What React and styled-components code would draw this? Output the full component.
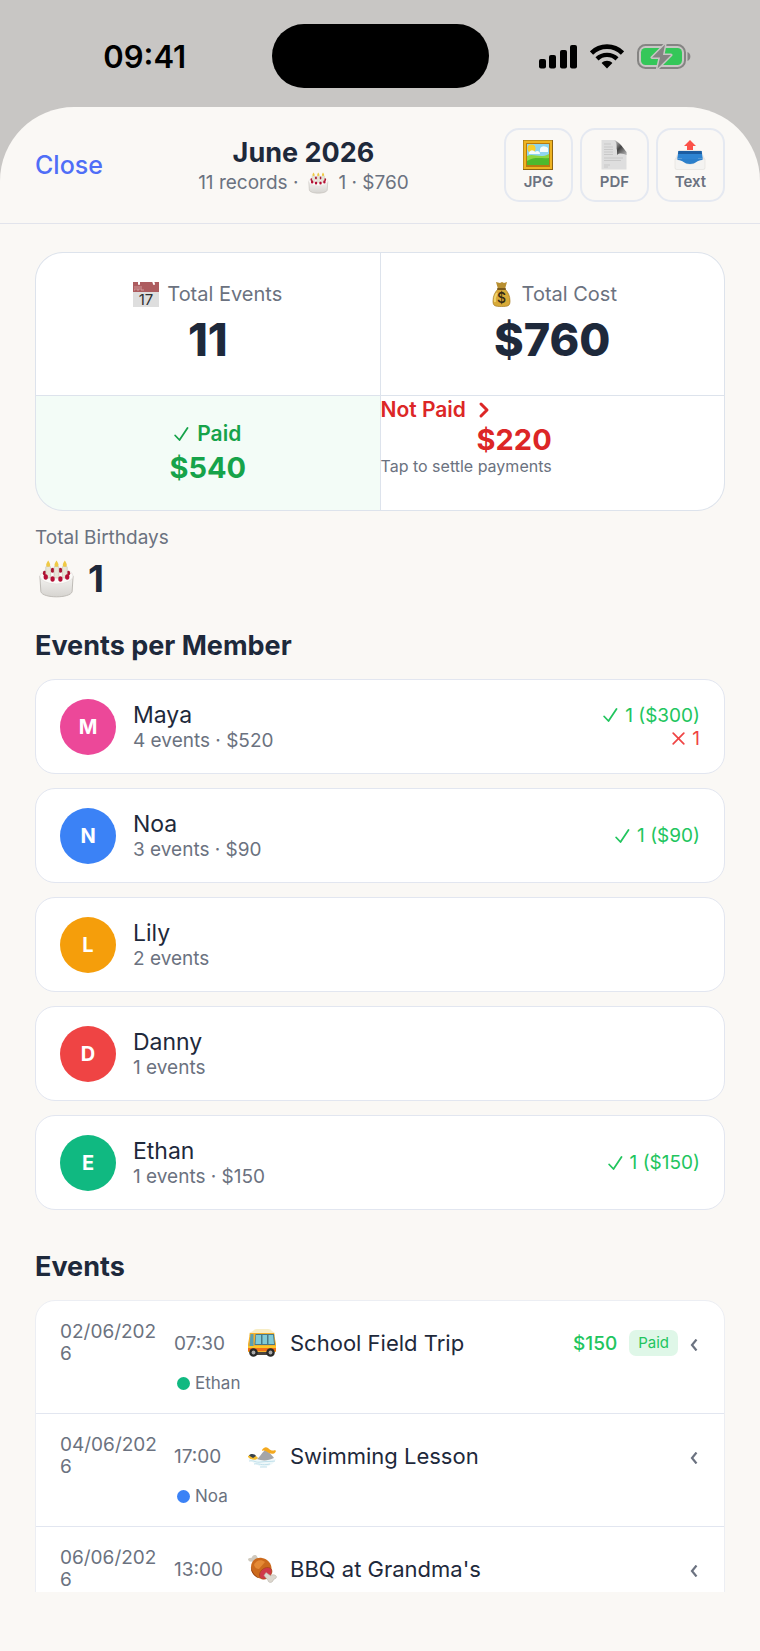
import React from "react";
import styled, { createGlobalStyle } from "styled-components";

const members = [
  { name: "Maya", color: "#ec4899", summary: "4 events · $520", paid: "1 ($300)", unpaid: "1" },
  { name: "Noa", color: "#3b82f6", summary: "3 events · $90", paid: "1 ($90)" },
  { name: "Lily", color: "#f59e0b", summary: "2 events" },
  { name: "Danny", color: "#ef4444", summary: "1 events" },
  { name: "Ethan", color: "#10b981", summary: "1 events · $150", paid: "1 ($150)" },
];

const events = [
  { date: "02/06/2026", time: "07:30", icon: BusIcon, title: "School Field Trip", price: "$150", paid: true, member: "Ethan", color: "#10b981" },
  { date: "04/06/2026", time: "17:00", icon: SwimIcon, title: "Swimming Lesson", member: "Noa", color: "#3b82f6" },
  { date: "06/06/2026", time: "13:00", icon: MeatIcon, title: "BBQ at Grandma's" },
];

export default function App() {
  return (
    <Screen>
      <GlobalStyle />
      <StatusBar>
        <Clock>09:41</Clock>
        <Island />
        <StatusIcons>
          <SignalIcon />
          <WifiIcon />
          <BatteryIcon />
        </StatusIcons>
      </StatusBar>
      <Sheet>
        <Header>
          <CloseButton type="button">Close</CloseButton>
          <HeaderText>
            <Title>June 2026</Title>
            <Subtitle>
              11 records · <CakeIcon size={24} /> 1 · $760
            </Subtitle>
          </HeaderText>
          <ExportButtons>
            <ExportButton type="button"><PictureIcon />JPG</ExportButton>
            <ExportButton type="button"><PageIcon />PDF</ExportButton>
            <ExportButton type="button"><OutboxIcon />Text</ExportButton>
          </ExportButtons>
        </Header>
        <Content>
          <Summary>
            <TotalCell>
              <TotalLabel><CalendarIcon />Total Events</TotalLabel>
              <TotalValue>11</TotalValue>
            </TotalCell>
            <TotalCell>
              <TotalLabel><MoneyIcon />Total Cost</TotalLabel>
              <TotalValue>$760</TotalValue>
            </TotalCell>
            <PaidCell>
              <PaymentLabel $gap="8px"><CheckIcon />Paid</PaymentLabel>
              <PaymentValue>$540</PaymentValue>
            </PaidCell>
            <UnpaidCell type="button">
              <PaymentLabel $gap="12px">Not Paid<ChevronIcon /></PaymentLabel>
              <UnpaidDetails>
                <PaymentValue>$220</PaymentValue>
                <Hint>Tap to settle payments</Hint>
              </UnpaidDetails>
            </UnpaidCell>
          </Summary>
          <BirthdayLabel>Total Birthdays</BirthdayLabel>
          <BirthdayValue><CakeIcon size={42} />1</BirthdayValue>

          <SectionTitle>Events per Member</SectionTitle>
          <MemberList>
            {members.map((member) => (
              <MemberCard key={member.name}>
                <Avatar $color={member.color}>{member.name[0]}</Avatar>
                <MemberInfo>
                  <MemberName>{member.name}</MemberName>
                  <MemberSummary>{member.summary}</MemberSummary>
                </MemberInfo>
                <MemberStats>
                  {member.paid && <Stat $color="#22c55e"><CheckIcon />{member.paid}</Stat>}
                  {member.unpaid && <Stat $color="#ef4444"><CrossIcon />{member.unpaid}</Stat>}
                </MemberStats>
              </MemberCard>
            ))}
          </MemberList>

          <SectionTitle $spaced>Events</SectionTitle>
          <EventList>
            {events.map(({ icon: Icon, ...event }) => (
              <EventRow key={event.date}>
                <EventMain>
                  <EventDate>{event.date}</EventDate>
                  <EventTime>{event.time}</EventTime>
                  <Icon />
                  <EventTitle>{event.title}</EventTitle>
                  {event.price && <Price>{event.price}</Price>}
                  {event.paid && <Badge>Paid</Badge>}
                  <ExpandButton type="button" aria-label={`Expand ${event.title}`}><BackIcon /></ExpandButton>
                </EventMain>
                {event.member && (
                  <EventMember><Dot $color={event.color} />{event.member}</EventMember>
                )}
              </EventRow>
            ))}
          </EventList>
        </Content>
      </Sheet>
    </Screen>
  );
}

function SignalIcon() {
  return (
    <svg width="38" height="25" viewBox="0 0 38 25">
      <rect x="0" y="15" width="7" height="9.500" rx="2" />
      <rect x="10" y="11" width="7" height="13.500" rx="2" />
      <rect x="21" y="6" width="7" height="18.500" rx="2" />
      <rect x="31" y="1" width="7" height="23.500" rx="2" />
    </svg>
  );
}

function WifiIcon() {
  return (
    <svg width="34" height="25" viewBox="0 0 34 25">
      <path d="M1.500 9 C10 .5 24 .5 32.500 9" fill="none" stroke="#000" strokeWidth="4.600" />
      <path d="M7 14.800 C12.500 9.500 21.500 9.500 27 14.800" fill="none" stroke="#000" strokeWidth="4.400" />
      <path d="M11.600 19 C14.500 16 19.500 16 22.400 19 L17 24.600 Z" />
    </svg>
  );
}

function BatteryIcon() {
  return (
    <svg width="54" height="27" viewBox="0 0 54 27">
      <rect x="1" y="2" width="47" height="23" rx="7.500" fill="none" stroke="#858483" strokeWidth="2" />
      <path d="M50.500 9 C54.300 10.500 54.300 16.500 50.500 18 Z" fill="#858483" />
      <rect x="4" y="5" width="41" height="17" rx="4.500" fill="#34c759" />
      <path d="M28 1.500 L15 14.500 H23 L20.500 25.500 L34 12 H26 Z" fill="#858483" stroke="#c8c6c4" strokeWidth="3" strokeLinejoin="round" paintOrder="stroke" />
    </svg>
  );
}

function ChevronIcon() {
  return (
    <svg width="12" height="18" viewBox="0 0 12 18" fill="none" stroke="currentColor" strokeWidth="3" strokeLinecap="round" strokeLinejoin="round">
      <path d="M3 3 L9 9 L3 15" />
    </svg>
  );
}

function BackIcon() {
  return (
    <svg width="8" height="12" viewBox="0 0 8 12" fill="none" stroke="currentColor" strokeWidth="2.200">
      <path d="M6.500 .5 L2 6 L6.500 11.500" />
    </svg>
  );
}

function CheckIcon() {
  return (
    <svg width="15" height="16" viewBox="0 0 15 16" fill="none" stroke="currentColor" strokeWidth="1.800" strokeLinecap="round" strokeLinejoin="round">
      <path d="M1.200 9.500 L5.500 14 L13.500 2" />
    </svg>
  );
}

function CrossIcon() {
  return (
    <svg width="13" height="13" viewBox="0 0 13 13" fill="none" stroke="currentColor" strokeWidth="1.700" strokeLinecap="round">
      <path d="M1.200 1.200 L11.800 11.800 M11.800 1.200 L1.200 11.800" />
    </svg>
  );
}

function CakeIcon({ size }) {
  return (
    <svg width={size} height={size} viewBox="-3 -2 43 42">
      <defs>
        <linearGradient id="cakeSide" x2="0" y2="1">
          <stop offset="0" stopColor="#f4f3f1" />
          <stop offset="1" stopColor="#d6d4d0" />
        </linearGradient>
      </defs>
      <path d="M2 16 L3 32 C5 39 33 39 35 32 L36 16 Z" fill="url(#cakeSide)" stroke="#bdbab5" strokeWidth="1" />
      <ellipse cx="19" cy="16" rx="17" ry="8" fill="#fbfaf8" stroke="#dedbd7" strokeWidth=".6" />
      <g fill="#ab1230">
        <ellipse cx="7" cy="13" rx="2" ry="2.400" />
        <ellipse cx="15" cy="10" rx="2" ry="2.600" />
        <ellipse cx="23" cy="10" rx="2" ry="2.600" />
        <ellipse cx="31" cy="13" rx="2" ry="2.400" />
      </g>
      <g fill="#e8e5d8" stroke="#bab5a4" strokeWidth=".5">
        <rect x="8" y="6" width="5" height="12" rx="1" />
        <rect x="16.500" y="6" width="5" height="12" rx="1" />
        <rect x="25" y="6" width="5" height="12" rx="1" />
      </g>
      <g fill="#efc945">
        <path d="M10.500 0 C7.500 4 8 6.500 10.500 6.500 S13.500 4 10.500 0 Z" />
        <path d="M19 0 C16 4 16.500 6.500 19 6.500 S22 4 19 0 Z" />
        <path d="M27.500 0 C24.500 4 25 6.500 27.500 6.500 S30.500 4 27.500 0 Z" />
      </g>
      <g fill="#b50f35">
        <ellipse cx="8" cy="17" rx="2.200" ry="2.800" />
        <ellipse cx="15" cy="19" rx="2.200" ry="2.800" />
        <ellipse cx="23" cy="19" rx="2.200" ry="2.800" />
        <ellipse cx="30" cy="17" rx="2.200" ry="2.800" />
      </g>
    </svg>
  );
}

function PictureIcon() {
  return (
    <svg width="32" height="30" viewBox="0 0 32 30">
      <rect x="1" width="30" height="30" fill="#8f6410" />
      <rect x="1.500" y=".5" width="28.500" height="28.500" fill="#eeb321" />
      <rect x="4" y="3" width="24" height="24" fill="#b97a10" />
      <rect x="5" y="4" width="22" height="21" fill="#8fd5ef" />
      <circle cx="9.500" cy="8.500" r="4" fill="#f8cf2c" />
      <path d="M7 13 C8 9 12 10 13 12 C15 10 18 11 18 14 H7 Z M18 9 C19 5 24 6 26 8 V12 H18 Z" fill="#f3fbfd" />
      <path d="M5 16 C12 13 18 19 27 14 V25 H5 Z" fill="#8dd742" />
      <path d="M5 21 C13 16 20 19 27 18 V25 H5 Z" fill="#4eb92d" />
    </svg>
  );
}

function PageIcon() {
  return (
    <svg width="32" height="30" viewBox="0 0 32 30">
      <defs>
        <linearGradient id="pageFold" x1="0" y1="0" x2=".8" y2="1">
          <stop offset="0" stopColor="#d5d5d5" />
          <stop offset=".55" stopColor="#444" />
          <stop offset="1" stopColor="#a5a5a5" />
        </linearGradient>
      </defs>
      <path d="M3.500 0 H17 L28.500 12 V29.500 H3.500 Z" fill="#dedede" />
      <path d="M16 0 C20 3 18 8 19 10 L19 15 C22 12 26 14 28.500 15 V12 C26 9 21 1 16 0 Z" fill="url(#pageFold)" />
      <g stroke="#c8c8c8" strokeWidth="1">
        <path d="M6 4 H13 M6 7 H15 M6 9.500 H15 M6 12 H15 M6 14.500 H15 M6 18 H25 M6 20.500 H23 M6 25 H12 M6 27 H10" />
      </g>
    </svg>
  );
}

function OutboxIcon() {
  return (
    <svg width="32" height="30" viewBox="0 0 32 30">
      <path d="M5 10 H27 L31 19 V29 H1 V19 Z" fill="#e9e8e6" />
      <path d="M4.500 11 H27.500 L29 20 H3 Z" fill="#2d84d2" />
      <path d="M4.500 11 H27.500 L28 14 H4 Z" fill="#1b5da1" />
      <path d="M1 19 H8 C11 26 21 26 24 19 H31 V28 Q31 29.500 29 29.500 H3 Q1 29.500 1 28 Z" fill="#f4f3f1" stroke="#dcdad7" strokeWidth=".5" />
      <path d="M3 19 H29 L28 20 C23 20 22 24 16 24 S9 20 4 20 Z" fill="#2b7fcb" />
      <path d="M16 0 L22 6 H19 V10 H13 V6 H10 Z" fill="#fb5148" />
    </svg>
  );
}

function CalendarIcon() {
  return (
    <svg width="26" height="26" viewBox="0 0 26 26">
      <rect y="1" width="26" height="25" fill="#dedede" />
      <rect y="1" width="26" height="10" fill="#ad5c5f" />
      <path d="M6 0 V3 M20 0 L21 3" stroke="#fff" strokeWidth="2" strokeLinecap="round" />
      <path d="M2 5 V9 H1 M4 5 V9 H6 V5 M8 5 V9 H11" fill="none" stroke="#d9a9aa" strokeWidth=".8" />
      <text x="13" y="23.500" textAnchor="middle" fontFamily="Inter, sans-serif" fontSize="15" fill="#303030">17</text>
    </svg>
  );
}

function MoneyIcon() {
  return (
    <svg width="26" height="26" viewBox="0 0 26 26">
      <path d="M8 1 L12 2 L14 1 L16 2 L19 1 L17 8 H10 Z" fill="#b88f30" />
      <path d="M10 8 H17 C20 11 22 15 22 20 C22 25 20 25.500 13.500 25.500 S5 25 5 20 C5 15 7 11 10 8 Z" fill="#d8aa38" stroke="#a57920" strokeWidth=".7" />
      <path d="M9 12 C7 15 6.500 18 7 21" fill="none" stroke="#f0d36d" strokeWidth="2" />
      <rect x="9" y="7" width="9" height="2" rx="1" fill="#79581a" />
      <text x="13.500" y="22" textAnchor="middle" fontFamily="Inter, sans-serif" fontSize="14" fontWeight="500" fill="#352a14">$</text>
    </svg>
  );
}

function BusIcon() {
  return (
    <svg width="30" height="28" viewBox="0 0 30 28">
      <rect x="3" y="20" width="24" height="6" fill="#4a4540" />
      <path d="M6 2 Q7 0 10 0 H21 Q24 0 25 2 L28 4 V7 H2 V4 Z" fill="#f7edc5" />
      <path d="M3 4 H27 L29 15 V23 H1 V15 Z" fill="#f6b12a" />
      <path d="M3.500 5 H6.500 V17 H2.500 Z" fill="#5d9fae" />
      <path d="M8.500 5 H27 L28 16 H7.500 Z" fill="#4a7987" />
      <path d="M9 6 H14 V15 H8.500 Z M15.500 6 H20 V15 H15.500 Z M21.500 6 H26 L27 15 H21.500 Z" fill="#80cbd7" />
      <rect x="1" y="17" width="28" height="2" fill="#fbc728" />
      <rect x="1" y="19" width="28" height="3" fill="#f0701a" />
      <g fill="#292929">
        <circle cx="6.500" cy="23.500" r="4.300" />
        <circle cx="23.500" cy="23.500" r="4.300" />
      </g>
      <g fill="#aaa">
        <circle cx="6.500" cy="23.500" r="1.900" />
        <circle cx="23.500" cy="23.500" r="1.900" />
      </g>
    </svg>
  );
}

function SwimIcon() {
  return (
    <svg width="30" height="28" viewBox="0 0 30 28">
      <path d="M1 17 C8 15 20 18 29 17 C27 21 24 24 17 25 C13 25 8 22 1 17 Z" fill="#eef8fa" />
      <path d="M10 17 C13 15 14 12 18 8 C21 9 25 13 27 16 C21 19 15 19 10 17 Z" fill="#a4a5a8" />
      <path d="M15 8 C17 5 19 4.500 21 6 C24 9 26 9 28 8 L29 9 C28 12 25 12.500 22 11 C19 9 17 8 15 9 Z" fill="#f4a91f" />
      <path d="M1 14 C4 12 9 13 11 16 C9 19 4 18 1 15 Z" fill="#f6bd2e" />
      <path d="M2 13.500 C4 11 8 12 9 14 L6 16 Z" fill="#37414a" />
      <path d="M2 19 C8 18 8 21 14 20 S22 20 28 19 M7 22 C12 21 14 24 23 22 M13 25 H20" fill="none" stroke="#c1e0eb" strokeWidth="1" />
    </svg>
  );
}

function MeatIcon() {
  return (
    <svg width="30" height="28" viewBox="0 0 30 28">
      <path d="M8 8 L5 6.500 C3 7 1 6 1 4 C2 2.500 4 3 5 2.500 C5 0 9 -1 10 1.500 L12 5 Z" fill="#cfc9be" />
      <path d="M4 12 C4 6 9 2 15 3 C21 4 25 9 24.500 15 L20 23 C15 25 10 23 7 20 C5 18 4 15 4 12 Z" fill="#cc6a1c" />
      <path d="M4 12 C5 18 10 23 14 23.500 L10 22.500 C6 20 3.500 16 4 12 Z" fill="#8f3c10" />
      <path d="M7 10 C9 5 14 4 18 7 L12 14 C10 14 8 13 7 10 Z" fill="#e58a35" />
      <path d="M12.500 20 C12.500 15 19 11 23 13 C26 15 25 19 22 22 C18 25 12.500 25 12.500 20 Z" fill="#d0384a" stroke="#b04a1c" strokeWidth="1" />
      <path d="M19 17.500 L24 21 C25 19 29 19.500 29.500 22 C29 24 27 24 26.500 24.500 C26 28 21.500 28.500 21 25.500 L17 20.500 Z" fill="#dcd7ce" stroke="#b1aaa0" strokeWidth=".5" />
    </svg>
  );
}

const GlobalStyle = createGlobalStyle`
  * {
    box-sizing: border-box;
  }

  body {
    margin: 0;
    background-color: #c8c6c4;
    color: #1e293b;
    font-family: Inter, "Liberation Sans", sans-serif;
  }

  h1, h2, p, ul {
    margin: 0;
    padding: 0;
  }

  button {
    border: 0;
    padding: 0;
    background: none;
    color: inherit;
    font-family: inherit;
    cursor: pointer;
  }

  svg {
    flex-shrink: 0;
  }
`

const Screen = styled.div`
  display: flex;
  flex-direction: column;
  height: 100vh;
`

const StatusBar = styled.div`
  display: grid;
  grid-template-columns: 1fr auto 1fr;
  align-items: center;
  padding: 24px 0 19px;
`

const Clock = styled.time`
  padding-left: 18px;
  color: #000;
  font-size: 31px;
  font-weight: 600;
  text-align: center;
`

const Island = styled.div`
  width: 217px;
  height: 64px;
  border-radius: 32px;
  background-color: #000;
`

const StatusIcons = styled.div`
  display: flex;
  align-items: center;
  justify-content: center;
  gap: 13px;
  padding-right: 19px;
`

const Sheet = styled.main`
  display: flex;
  flex: 1;
  flex-direction: column;
  min-height: 0;
  padding-bottom: 59px;
  border-radius: 74px 74px 0 0;
  background-color: #faf8f5;
`

const Header = styled.header`
  display: flex;
  align-items: center;
  justify-content: space-between;
  padding: 21px 35px;
  border-bottom: 1px solid #e2e4ec;
`

const CloseButton = styled.button`
  color: #4f6ef7;
  font-size: 25px;
  font-weight: 500;
`

const HeaderText = styled.div`
  padding-top: 4px;
  text-align: center;
`

const Title = styled.h1`
  font-size: 27px;
  font-weight: 700;
  line-height: 32px;
`

const Subtitle = styled.p`
  display: flex;
  align-items: center;
  gap: 8px;
  color: #6b7280;
  font-size: 19px;
  line-height: 28px;
`

const ExportButtons = styled.div`
  display: flex;
  gap: 7px;
`

const ExportButton = styled.button`
  display: flex;
  flex-direction: column;
  align-items: center;
  justify-content: center;
  gap: 2px;
  width: 69px;
  height: 74px;
  border: 2px solid #e5e9f1;
  border-radius: 15px;
  color: #6b7280;
  font-size: 15px;
  font-weight: 600;
  line-height: 19px;
`

const Content = styled.div`
  flex: 1;
  min-height: 0;
  overflow-y: auto;
  padding: 28px 35px 0;
  scrollbar-width: none;
`

const Summary = styled.section`
  display: grid;
  grid-template-columns: 1fr 1fr;
  gap: 1px;
  overflow: hidden;
  border: 1px solid #dde3ec;
  border-radius: 28px;
  background-color: #dde3ec;
`

const TotalCell = styled.div`
  display: flex;
  flex-direction: column;
  align-items: center;
  padding: 27px 0 23px;
  background-color: #fff;
`

const TotalLabel = styled.div`
  display: flex;
  align-items: center;
  gap: 8px;
  color: #6b7280;
  font-size: 20px;
  line-height: 28px;
`

const TotalValue = styled.div`
  font-size: 45px;
  font-weight: 800;
  line-height: 64px;
`

const PaidCell = styled.div`
  display: flex;
  flex-direction: column;
  align-items: center;
  padding: 24px 0 22px;
  background-color: #f3fcf7;
  color: #16a34a;
`

const UnpaidCell = styled.button`
  display: flex;
  flex-direction: column;
  align-items: flex-start;
  background-color: #fff;
  color: #dc2626;
`

const PaymentLabel = styled.div`
  display: flex;
  align-items: center;
  gap: ${(props) => props.$gap};
  font-size: 21px;
  font-weight: 600;
  line-height: 28px;
`

const PaymentValue = styled.div`
  font-size: 29px;
  font-weight: 700;
  line-height: 40px;
`

const UnpaidDetails = styled.div`
  display: flex;
  flex-direction: column;
  align-items: flex-end;

  ${PaymentValue} {
    line-height: 32px;
  }
`

const Hint = styled.div`
  color: #6b7280;
  font-size: 16px;
  line-height: 20px;
`

const BirthdayLabel = styled.p`
  padding-top: 13px;
  color: #6b7280;
  font-size: 19px;
  line-height: 28px;
`

const BirthdayValue = styled.p`
  display: flex;
  align-items: center;
  gap: 11px;
  font-size: 37px;
  font-weight: 700;
  line-height: 54px;
`

const SectionTitle = styled.h2`
  padding: ${(props) => (props.$spaced ? "40px" : "23px")} 0 16px;
  font-size: 27px;
  font-weight: 700;
  line-height: 34px;
`

const MemberList = styled.ul`
  display: flex;
  flex-direction: column;
  gap: 14px;
  list-style: none;
`

const MemberCard = styled.li`
  display: flex;
  align-items: center;
  gap: 17px;
  height: 95px;
  padding: 0 24px;
  border: 1px solid #e2e6f0;
  border-radius: 20px;
  background-color: #fff;
`

const Avatar = styled.div`
  display: flex;
  align-items: center;
  justify-content: center;
  width: 56px;
  height: 56px;
  border-radius: 50%;
  background-color: ${(props) => props.$color};
  color: #fff;
  font-size: 20px;
  font-weight: 700;
`

const MemberInfo = styled.div`
  flex: 1;
`

const MemberName = styled.div`
  font-size: 23px;
  line-height: 28px;
`

const MemberSummary = styled.div`
  color: #6b7280;
  font-size: 19px;
  line-height: 24px;
`

const MemberStats = styled.div`
  display: flex;
  flex-direction: column;
  align-items: flex-end;
`

const Stat = styled.div`
  display: flex;
  align-items: center;
  gap: 7px;
  color: ${(props) => props.$color};
  font-size: 19px;
  line-height: 23px;
`

const EventList = styled.ul`
  border: 1px solid #eceef3;
  border-radius: 20px;
  background-color: #fff;
  list-style: none;
`

const EventRow = styled.li`
  min-height: 112px;
  padding: 20px 24px;
  border-bottom: 1px solid #e2e6f0;
`

const EventMain = styled.div`
  display: flex;
  align-items: center;
`

const EventDate = styled.div`
  width: 98px;
  margin-right: 16px;
  color: #6b7280;
  font-size: 19px;
  line-height: 22px;
  word-break: break-all;
`

const EventTime = styled.div`
  width: 73px;
  color: #6b7280;
  font-size: 19px;
`

const EventTitle = styled.div`
  flex: 1;
  padding-left: 13px;
  font-size: 22px;
`

const Price = styled.div`
  color: #22c55e;
  font-size: 19px;
  font-weight: 500;
`

const Badge = styled.div`
  margin-left: 12px;
  padding: 0 9px;
  border-radius: 7px;
  background-color: #dff7e8;
  color: #22c55e;
  font-size: 15px;
  line-height: 26px;
`

const ExpandButton = styled.button`
  display: flex;
  margin-left: 12px;
  padding: 3px 2px 0 0;
  color: #6b7280;
`

const EventMember = styled.div`
  display: flex;
  align-items: center;
  gap: 5px;
  padding: 8px 0 0 117px;
  color: #6b7280;
  font-size: 17px;
  line-height: 20px;
`

const Dot = styled.span`
  width: 13px;
  height: 13px;
  border-radius: 50%;
  background-color: ${(props) => props.$color};
`
